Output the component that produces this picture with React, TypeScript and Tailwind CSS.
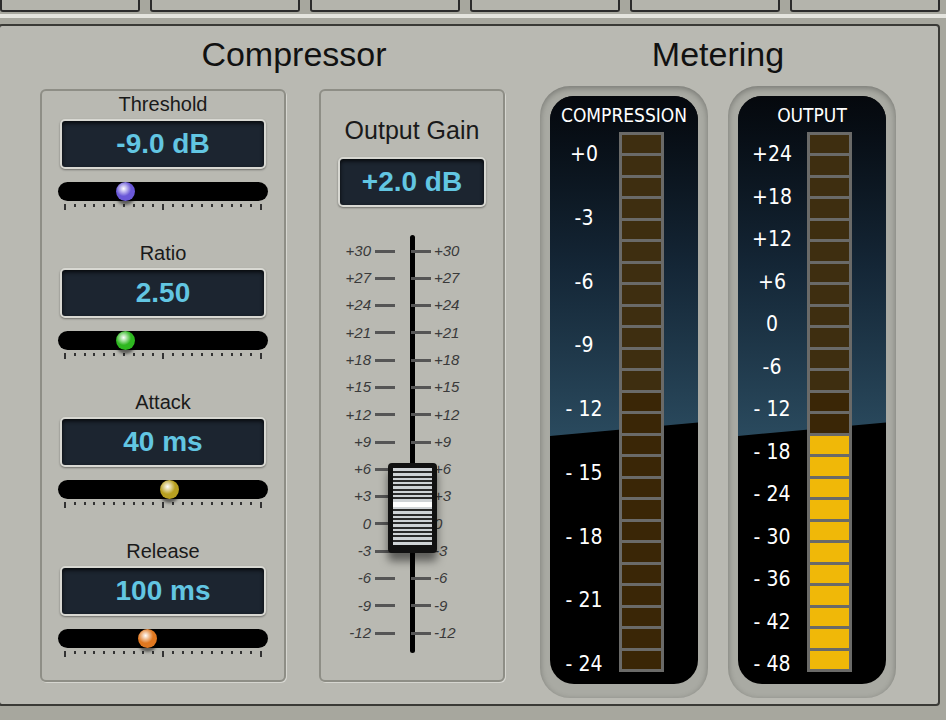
import React from "react";

const font = { fontFamily: '"Liberation Sans", Arial, sans-serif' };
const narrow = { fontFamily: '"Liberation Sans Narrow", "DejaVu Sans Condensed", "Liberation Sans", sans-serif' };

function Display({ v, w = "w-[206px]" }: { v: string; w?: string }) {
  return (
    <div className={`${w} h-[50px] rounded-[5px] bg-[#1c2530] border-2 border-[#d8d8d2] shadow-[inset_0_2px_4px_rgba(0,0,0,0.8),0_1px_2px_rgba(0,0,0,0.4)] flex items-center justify-center text-[28px] font-bold text-[#62c6e2]`}>
      {v}
    </div>
  );
}

function Slider({ pos, color }: { pos: number; color: string }) {
  return (
    <div className="relative w-[210px] h-[30px]">
      <div className="absolute left-0 top-0 w-[210px] h-[19px] rounded-full bg-black" />
      <div className="absolute left-[6px] right-[6px] top-[22px] flex justify-between items-start">
        {Array.from({ length: 21 }).map((_, i) => (
          <div key={i} className={`w-[2px] bg-[#333] ${i === 0 || i === 10 || i === 20 ? "h-[6px]" : "h-[3px]"}`} />
        ))}
      </div>
      <div
        className="absolute top-[0px] w-[19px] h-[19px] rounded-full shadow-[0_4px_3px_rgba(0,0,0,0.5)]"
        style={{ left: pos - 10, background: `radial-gradient(circle at 40% 35%, #fff 0%, ${color} 45%, ${color} 80%)` }}
      />
    </div>
  );
}

function Control({ label, v, pos, color }: { label: string; v: string; pos: number; color: string }) {
  return (
    <div className="flex flex-col items-center">
      <div className="text-[20px] leading-[22px] text-[#1a1a1a]">{label}</div>
      <div className="mt-[4px]"><Display v={v} /></div>
      <div className="mt-[13px]"><Slider pos={pos} color={color} /></div>
    </div>
  );
}

const faderLabels = ["+30", "+27", "+24", "+21", "+18", "+15", "+12", "+9", "+6", "+3", "0", "-3", "-6", "-9", "-12"];

function Meter({ title, labels, lit }: { title: string; labels: string[]; lit: number }) {
  const n = 25;
  return (
    <div className="w-[168px] h-[612px] rounded-[30px] bg-[#a9aaa3] shadow-[inset_0_2px_6px_rgba(0,0,0,0.3)] p-[10px] pb-[14px]">
      <div className="relative w-full h-full rounded-[24px] bg-black overflow-hidden">
        <div className="absolute inset-x-0 top-0 h-[340px] bg-gradient-to-b from-[#05080d] via-[#142636] to-[#2a4a5e]" style={{ clipPath: "polygon(0 0,100% 0,100% 96%,0 100%)" }} />
        <div className="relative text-center text-white text-[19px] pt-[8px] leading-[22px]" style={narrow}>{title}</div>
        <div className="absolute left-0 top-[48px] w-[68px] h-[530px] flex flex-col justify-between items-center text-white text-[21px]" style={narrow}>
          {labels.map((l) => <div key={l} className="leading-[20px]">{l}</div>)}
        </div>
        <div className="absolute left-[69px] top-[36px] w-[45px] h-[540px] bg-[#6a6a68] p-[3px] flex flex-col gap-[3px]">
          {Array.from({ length: n }).map((_, i) => (
            <div key={i} className={`flex-1 ${i >= n - lit ? "bg-[#f0b808]" : i >= 12 ? "bg-[#3a2606]" : "bg-[#3e2e10]"}`} />
          ))}
        </div>
      </div>
    </div>
  );
}

export default function App() {
  return (
    <div className="w-[946px] h-[720px] bg-[#a7a79e] overflow-hidden relative" style={font}>
      <div className="flex gap-[10px] -mt-[4px] px-0 h-[16px]">
        {[140, 150, 150, 150, 150, 150].map((w, i) => (
          <div key={i} className="h-[16px] rounded-b-[3px] border-2 border-t-0 border-[#2b2b2b] bg-[#b4b4ac]" style={{ width: w }} />
        ))}
      </div>
      <div className="h-[4px] mt-[2px] bg-[#e4e4de]" />
      <div className="mt-[6px] ml-[-2px] w-[942px] h-[682px] border-2 border-[#3a3a36] rounded-[4px] bg-[#b9b9b2] relative">
        <div className="flex">
          <div className="w-[538px] flex flex-col">
            <div className="text-center text-[34px] leading-[40px] mt-[8px] pl-[50px] text-[#111]">Compressor</div>
            <div className="flex mt-[15px] ml-[40px] gap-[33px]">
              <div className="w-[246px] h-[593px] border-2 border-[#8e8e86] rounded-[6px] shadow-[1px_1px_0_#d6d6d0] flex flex-col items-center pt-[2px] gap-[30px]">
                <Control label="Threshold" v="-9.0 dB" pos={68} color="#6a58d8" />
                <Control label="Ratio" v="2.50" pos={68} color="#2eb820" />
                <Control label="Attack" v="40 ms" pos={112} color="#b8a020" />
                <Control label="Release" v="100 ms" pos={90} color="#e07820" />
              </div>
              <div className="w-[186px] h-[593px] border-2 border-[#8e8e86] rounded-[6px] shadow-[1px_1px_0_#d6d6d0] flex flex-col items-center">
                <div className="text-[25px] mt-[24px] leading-[30px] text-[#1a1a1a]">Output Gain</div>
                <div className="mt-[12px]"><Display v="+2.0 dB" w="w-[148px]" /></div>
                <div className="relative w-[184px] h-[420px] mt-[28px]">
                  <div className="absolute left-[90px] top-[0px] w-[5px] h-[418px] rounded-full bg-black" />
                  <div className="absolute left-0 right-0 top-[6px] flex flex-col gap-[7.3px]">
                    {faderLabels.map((l) => (
                      <div key={l} className="flex items-center h-[20px] text-[15px] italic text-[#3a3a3a]">
                        <div className="w-[55px] text-right pr-[4px]">{l}</div>
                        <div className="w-[20px] h-[3px] bg-[#555]" />
                        <div className="w-[16px]" />
                        <div className="w-[20px] h-[3px] bg-[#555]" />
                        <div className="pl-[3px]">{l}</div>
                      </div>
                    ))}
                  </div>
                  <div className="absolute left-[68px] top-[228px] w-[49px] h-[90px] rounded-[4px] bg-[#111] shadow-[0_8px_8px_rgba(0,0,0,0.5)] p-[5px] pb-[8px]">
                    <div className="w-full h-full bg-[#cfd3d6] flex flex-col justify-around py-[2px]">
                      {Array.from({ length: 16 }).map((_, i) => (
                        <div key={i} className={`h-[2px] ${i === 7 ? "bg-white h-[5px]" : "bg-[#2a2a2a]"}`} />
                      ))}
                    </div>
                  </div>
                </div>
              </div>
            </div>
          </div>
          <div className="flex-1 flex flex-col">
            <div className="text-center text-[34px] leading-[40px] mt-[8px] pr-[40px] text-[#111]">Metering</div>
            <div className="flex gap-[20px] mt-[12px] ml-[2px]">
              <Meter title="COMPRESSION" labels={["+0", "-3", "-6", "-9", "- 12", "- 15", "- 18", "- 21", "- 24"]} lit={0} />
              <Meter title="OUTPUT" labels={["+24", "+18", "+12", "+6", "0", "-6", "- 12", "- 18", "- 24", "- 30", "- 36", "- 42", "- 48"]} lit={11} />
            </div>
          </div>
        </div>
      </div>
    </div>
  );
}
